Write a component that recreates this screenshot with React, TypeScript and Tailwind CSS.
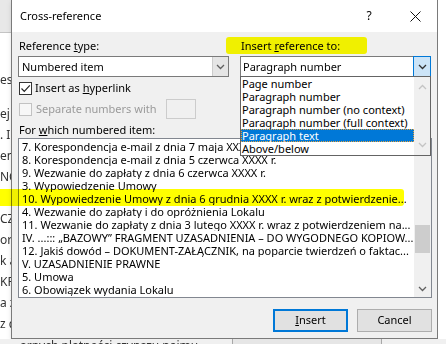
import React from 'react';

const items = [
  '7. Korespondencja e-mail z dnia 7 maja XXXX r.',
  '8. Korespondencja e-mail z dnia 5 czerwca XXXX r.',
  '9. Wezwanie do zapłaty z dnia 6 czerwca XXXX r.',
  '3. Wypowiedzenie Umowy',
  '10. Wypowiedzenie Umowy z dnia 6 grudnia XXXX r. wraz z potwierdzenie...',
  '4. Wezwanie do zapłaty i do opróżnienia Lokalu',
  '11. Wezwanie do zapłaty z dnia 3 lutego XXXX r. wraz z potwierdzeniem na...',
  'IV. ...::: „BAZOWY” FRAGMENT UZASADNIENIA – DO WYGODNEGO KOPIOW...',
  '12. Jakiś dowód – DOKUMENT-ZAŁĄCZNIK, na poparcie twierdzeń o faktac...',
  'V. UZASADNIENIE PRAWNE',
  '5. Umowa',
  '6. Obowiązek wydania Lokalu',
];

const options = [
  'Page number',
  'Paragraph number',
  'Paragraph number (no context)',
  'Paragraph number (full context)',
  'Paragraph text',
  'Above/below',
];

// bits of the document behind the dialog
const fragments = ['ej l', '. Ik', 'eni', 'NC', '', 'CZ', 'ora', 'k a', 'KRS', 'a z', 'z d'];

const Chevron = ({ color = '#404040', up = false }: { color?: string; up?: boolean }) => (
  <svg width="9" height="6" viewBox="0 0 9 6">
    <path
      d={up ? 'M1 5l3.5-3.5L8 5' : 'M1 1l3.5 3.5L8 1'}
      fill="none"
      stroke={color}
      strokeWidth="1.3"
    />
  </svg>
);

const App = () => {
  return (
    <div className="relative w-[446px] h-[344px] overflow-hidden bg-white font-['Noto_Sans',sans-serif] text-[11px] text-black">
      <div className="flex h-[339px]">
        {/* left backdrop strip */}
        <div className="w-[11px] flex flex-col overflow-hidden text-[12px] text-[#333]">
          <div className="h-[33px] bg-[#e8e8e8] border-b border-[#c4c4c4]" />
          <div className="h-[39px]" />
          <div className="h-[16px] leading-[16px] whitespace-nowrap">es</div>
          <div className="h-[15px]" />
          {fragments.map((f, i) => (
            <div key={i} className="h-[21px] leading-[21px] whitespace-nowrap">
              {f}
            </div>
          ))}
        </div>

        {/* dialog */}
        <div className="w-[427px] h-[339px] flex flex-col border-x border-b border-[#7a7a7a] bg-[#f0f0f0] shadow-[2px_2px_6px_rgba(0,0,0,0.25)]">
          <div className="h-[32px] bg-white flex items-center pl-[8px] pr-[7px]">
            <span className="text-[11px]">Cross-reference</span>
            <div className="flex-1" />
            <span className="w-[30px] text-center text-[12px]">?</span>
            <div className="w-[16px]" />
            <div className="w-[30px] flex justify-center">
              <svg width="11" height="11" viewBox="0 0 11 11">
                <path d="M0.5 0.5l10 10M10.5 0.5l-10 10" stroke="#111" strokeWidth="1" />
              </svg>
            </div>
          </div>

          <div className="flex-1 flex flex-col pl-[6px] pr-[5px] pt-[6px]">
            <div className="flex gap-[11px]">
              <div className="w-[211px] flex flex-col">
                <div className="h-[16px] leading-[16px] pl-[1px]">
                  Reference <u>t</u>ype:
                </div>
                <div className="mt-[2px] h-[21px] flex border border-[#7a7a7a] bg-white">
                  <div className="flex-1 pl-[3px] leading-[19px]">Numbered item</div>
                  <div className="w-[16px] flex items-center justify-center bg-[#e5e5e5] border-l border-[#cccccc]">
                    <Chevron color="#606060" />
                  </div>
                </div>
              </div>

              <div className="w-[191px] relative flex flex-col">
                <div className="h-[16px] leading-[16px] pl-[1px]">
                  Insert <u>r</u>eference to:
                </div>
                <div className="mt-[2px] h-[21px] flex border border-[#7a7a7a] bg-white">
                  <div className="flex-1 pl-[2px] leading-[19px]">Paragraph number</div>
                  <div className="w-[18px] -my-px -mr-px flex items-center justify-center bg-[#cce4f7] border border-[#0078d7]">
                    <Chevron color="#303030" />
                  </div>
                </div>

                {/* open dropdown */}
                <div className="absolute z-10 left-0 top-[38px] w-[191px] h-[80px] flex border border-[#646464] bg-white">
                  <div className="flex-1 flex flex-col">
                    {options.map((o) => (
                      <div
                        key={o}
                        className={
                          o === 'Paragraph text'
                            ? 'h-[13px] leading-[13px] pl-[1px] bg-[#0078d7] text-white outline-1 outline-dotted outline-[#e8a33d] -outline-offset-1'
                            : 'h-[13px] leading-[13px] pl-[1px] whitespace-nowrap'
                        }
                      >
                        {o}
                      </div>
                    ))}
                  </div>
                  <div className="w-[16px] bg-[#f0f0f0] flex flex-col items-center justify-between py-[7px]">
                    <Chevron color="#c4c4c4" up />
                    <Chevron color="#c4c4c4" />
                  </div>
                </div>
              </div>
            </div>

            <div className="mt-[5px] h-[13px] flex items-center">
              <div className="ml-[1px] w-[13px] h-[13px] border border-[#333] bg-white flex items-center justify-center">
                <svg width="11" height="11" viewBox="0 0 11 11">
                  <path d="M1.5 5.5l2.8 2.8 5.5-6" fill="none" stroke="#222" strokeWidth="1.2" />
                </svg>
              </div>
              <span className="ml-[3px]">
                Insert as <u>h</u>yperlink
              </span>
            </div>

            <div className="mt-[4px] h-[20px] flex items-center">
              <div className="ml-[1px] w-[13px] h-[13px] border border-[#c2c2c2] bg-[#f7f7f7]" />
              <span className="ml-[4px] w-[130px] text-[#9a9a9a] whitespace-nowrap">Separate numbers with</span>
              <div className="w-[30px] h-[20px] border border-[#cccccc] bg-[#f0f0f0]" />
            </div>

            <div className="mt-[3px] h-[16px] leading-[16px] pl-[1px]">
              For <u>w</u>hich numbered item:
            </div>

            <div className="h-[160px] flex border border-[#828790] bg-white">
              <div className="flex-1 flex flex-col pt-[1px] pl-[3px] overflow-hidden">
                {items.map((t) => (
                  <div key={t} className="h-[13px] leading-[13px] whitespace-nowrap overflow-hidden">
                    {t}
                  </div>
                ))}
              </div>
              <div className="w-[17px] bg-[#f0f0f0] flex flex-col">
                <div className="h-[17px] flex items-center justify-center">
                  <Chevron color="#606060" up />
                </div>
                <div className="flex-1 px-px">
                  <div className="mt-[69px] h-[28px] bg-[#cdcdcd]" />
                </div>
                <div className="h-[17px] flex items-center justify-center">
                  <Chevron color="#606060" />
                </div>
              </div>
            </div>

            <div className="mt-[11px] flex justify-end gap-[9px]">
              <button className="w-[75px] h-[23px] border-2 border-[#0078d7] bg-[#e1e1e1] text-[11px]">
                <u>I</u>nsert
              </button>
              <button className="w-[75px] h-[23px] border border-[#adadad] bg-[#e1e1e1] text-[11px]">
                Cancel
              </button>
            </div>
          </div>
        </div>

        <div className="flex-1 bg-white" />
      </div>

      {/* bottom backdrop */}
      <div className="h-[5px] flex overflow-hidden text-[12px] text-[#333]">
        <div className="w-[232px] bg-[#f0f0f0] pl-[20px] overflow-hidden">
          <div className="-mt-[1px] leading-[16px] whitespace-nowrap">arnych płatności czynszu najmu</div>
        </div>
        <div className="w-[150px] bg-[#e6e6e6] border-x border-[#a8a8a8]" />
        <div className="flex-1 bg-[#f0f0f0]" />
      </div>

      {/* highlighter marks */}
      <div className="absolute left-[226px] top-[37px] w-[141px] h-[17px] rounded-[3px] bg-[#ffff00] mix-blend-multiply pointer-events-none" />
      <div className="absolute left-0 top-[189px] w-[404px] h-[17px] rounded-r-[3px] bg-[#ffff00] mix-blend-multiply pointer-events-none" />
    </div>
  );
};

export default App;
